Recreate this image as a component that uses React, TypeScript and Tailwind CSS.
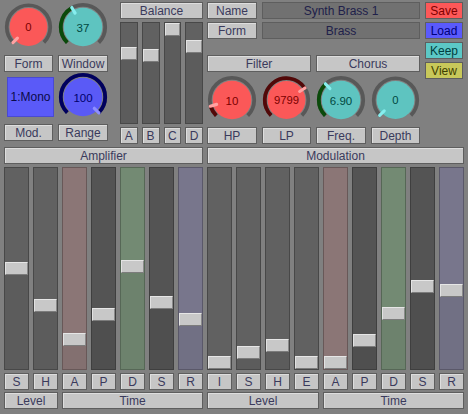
import React from "react";

const base =
  "flex items-center justify-center h-[17px] border border-[#5e5e5e] text-[12px] leading-none";
const btn = `${base} bg-[#c6c6c6] shadow-[inset_1px_1px_0_#dedede] text-[#3a3a5c]`;
const field = `${base} bg-[#717171] border-[#5a5a5a] text-[#20204a]`;

type KnobProps = {
  value: string;
  angle: number;
  disk: string;
  arc: string;
  tick: string;
  ink: string;
};

function pt(a: number, r: number) {
  const rad = (a * Math.PI) / 180;
  return [25 + r * Math.sin(rad), 25 - r * Math.cos(rad)];
}

function arcPath(a1: number, a2: number, r: number) {
  const [x1, y1] = pt(a1, r);
  const [x2, y2] = pt(a2, r);
  const large = a2 - a1 > 180 ? 1 : 0;
  return `M${x1} ${y1} A${r} ${r} 0 ${large} 1 ${x2} ${y2}`;
}

function Knob({ value, angle, disk, arc, tick, ink }: KnobProps) {
  const [tx1, ty1] = pt(angle, 16);
  const [tx2, ty2] = pt(angle, 22.5);
  return (
    <div className="flex items-center justify-center h-[50px]">
      <svg width="50" height="50" viewBox="0 0 50 50">
        <path d={arcPath(-135, 135, 22.2)} stroke="#585858" strokeWidth="3.8" fill="none" />
        {angle > -134 && (
          <path d={arcPath(-135, angle, 22.2)} stroke={arc} strokeWidth="3.8" fill="none" />
        )}
        <circle cx="25" cy="25" r="19.3" fill={disk} />
        <line x1={tx1} y1={ty1} x2={tx2} y2={ty2} stroke={tick} strokeWidth="3.2" strokeLinecap="round" />
        <text x="25" y="25.5" textAnchor="middle" dominantBaseline="central" fontSize="11.5" fill={ink}>
          {value}
        </text>
      </svg>
    </div>
  );
}

const red = { disk: "#fb5858", arc: "#520808", tick: "#ffa2a2", ink: "#7a0000" };
const teal = { disk: "#5ec4c0", arc: "#0a4a0a", tick: "#86eeee", ink: "#004840" };
const blue = { disk: "#5a5af6", arc: "#00005e", tick: "#8e8eff", ink: "#00006a" };

function Fader({ color, top }: { color: string; top: number }) {
  return (
    <div className={`flex flex-col border border-black/25 ${color}`}>
      <div className="shrink-0" style={{ height: top }} />
      <div className="h-[13px] shrink-0 bg-[#c8c8c8] border border-t-[#e6e6e6] border-l-[#e2e2e2] border-b-[#7c7c7c] border-r-[#8a8a8a]" />
      <div className="flex-1 bg-black/[0.05]" />
    </div>
  );
}

const gray = "bg-[#616161]";
const dark = "bg-[#545454]";
const pink = "bg-[#8b7676]";
const green = "bg-[#738a73]";
const purple = "bg-[#78768c]";

const amp = [
  { l: "S", c: gray, t: 94 },
  { l: "H", c: gray, t: 131 },
  { l: "A", c: pink, t: 165 },
  { l: "P", c: dark, t: 140 },
  { l: "D", c: green, t: 92 },
  { l: "S", c: dark, t: 128 },
  { l: "R", c: purple, t: 145 },
];

const mod = [
  { l: "I", c: gray, t: 188 },
  { l: "S", c: gray, t: 178 },
  { l: "H", c: gray, t: 171 },
  { l: "E", c: gray, t: 188 },
  { l: "A", c: pink, t: 188 },
  { l: "P", c: dark, t: 166 },
  { l: "D", c: green, t: 139 },
  { l: "S", c: dark, t: 112 },
  { l: "R", c: purple, t: 116 },
];

const balance = [
  { l: "A", t: 24 },
  { l: "B", t: 26 },
  { l: "C", t: 0 },
  { l: "D", t: 17 },
];

export default function App() {
  return (
    <div className="w-[468px] h-[414px] bg-[#808080] pt-[2px] pl-[4px] font-['Liberation_Sans',Arial,sans-serif] select-none overflow-hidden">
      {/* top panel */}
      <div className="flex h-[142px]">
        {/* oscillator */}
        <div className="w-[104px] grid grid-cols-[49px_50px] gap-x-[5px] content-start">
          <Knob value="0" angle={-135} {...red} />
          <Knob value="37" angle={-30} {...teal} />
          <div className={`${btn} mt-[3px]`}>Form</div>
          <div className={`${btn} mt-[3px]`}>Window</div>
          <div className="h-[50px] flex items-center">
            <div className="ml-[3px] w-[47px] h-[40px] shrink-0 flex items-center justify-center bg-[#5a5af8] border border-[#4a4ad0] text-[12px] text-[#0a0a48]">
              1:Mono
            </div>
          </div>
          <Knob value="100" angle={135} {...blue} />
          <div className={`${btn} mt-[2px]`}>Mod.</div>
          <div className={`${btn} mt-[2px]`}>Range</div>
        </div>

        {/* balance */}
        <div className="ml-[12px] w-[83px] flex flex-col">
          <div className={btn}>Balance</div>
          <div className="mt-[3px] h-[102px] grid grid-cols-4 gap-x-[4px]">
            {balance.map((b) => (
              <Fader key={b.l} color={gray} top={b.t} />
            ))}
          </div>
          <div className="mt-[3px] grid grid-cols-4 gap-x-[4px]">
            {balance.map((b) => (
              <div key={b.l} className={btn}>
                {b.l}
              </div>
            ))}
          </div>
        </div>

        {/* patch + effects */}
        <div className="ml-[4px] w-[257px] flex gap-x-[5px]">
          <div className="w-[213px] flex flex-col">
            <div className="flex gap-x-[5px]">
              <div className={`${btn} w-[50px]`}>Name</div>
              <div className={`${field} flex-1`}>Synth Brass 1</div>
            </div>
            <div className="flex gap-x-[5px] mt-[3px]">
              <div className={`${btn} w-[50px]`}>Form</div>
              <div className={`${field} flex-1`}>Brass</div>
            </div>
            <div className="grid grid-cols-2 gap-x-[5px] mt-[16px]">
              <div className={btn}>Filter</div>
              <div className={btn}>Chorus</div>
            </div>
            <div className="grid grid-cols-[50px_49px_50px_49px] gap-x-[5px] mt-[3px]">
              <Knob value="10" angle={-106} {...red} />
              <Knob value="9799" angle={57} {...red} />
              <Knob value="6.90" angle={-44} {...teal} />
              <Knob value="0" angle={-134} {...teal} />
              <div className={`${btn} mt-[2px]`}>HP</div>
              <div className={`${btn} mt-[2px]`}>LP</div>
              <div className={`${btn} mt-[2px]`}>Freq.</div>
              <div className={`${btn} mt-[2px]`}>Depth</div>
            </div>
          </div>
          <div className="w-[38px] flex flex-col gap-y-[3px]">
            <div className={`${base} bg-[#fd5858] text-[#800000]`}>Save</div>
            <div className={`${base} bg-[#5a5afc] text-[#00007a]`}>Load</div>
            <div className={`${base} bg-[#5cc8c6] text-[#003e3e]`}>Keep</div>
            <div className={`${base} bg-[#c8c85a] text-[#3e3e00]`}>View</div>
          </div>
        </div>
      </div>

      {/* envelopes */}
      <div className="flex gap-x-[4px] mt-[3px]">
        <div className="w-[199px] flex flex-col">
          <div className={btn}>Amplifier</div>
          <div className="mt-[3px] h-[203px] grid grid-cols-7 gap-x-[4px]">
            {amp.map((f, i) => (
              <Fader key={i} color={f.c} top={f.t} />
            ))}
          </div>
          <div className="mt-[3px] grid grid-cols-7 gap-x-[4px]">
            {amp.map((f, i) => (
              <div key={i} className={btn}>
                {f.l}
              </div>
            ))}
            <div className={`${btn} col-span-2 mt-[2px]`}>Level</div>
            <div className={`${btn} col-span-5 mt-[2px]`}>Time</div>
          </div>
        </div>
        <div className="w-[257px] flex flex-col">
          <div className={btn}>Modulation</div>
          <div className="mt-[3px] h-[203px] grid grid-cols-9 gap-x-[4px]">
            {mod.map((f, i) => (
              <Fader key={i} color={f.c} top={f.t} />
            ))}
          </div>
          <div className="mt-[3px] grid grid-cols-9 gap-x-[4px]">
            {mod.map((f, i) => (
              <div key={i} className={btn}>
                {f.l}
              </div>
            ))}
            <div className={`${btn} col-span-4 mt-[2px]`}>Level</div>
            <div className={`${btn} col-span-5 mt-[2px]`}>Time</div>
          </div>
        </div>
      </div>
    </div>
  );
}
